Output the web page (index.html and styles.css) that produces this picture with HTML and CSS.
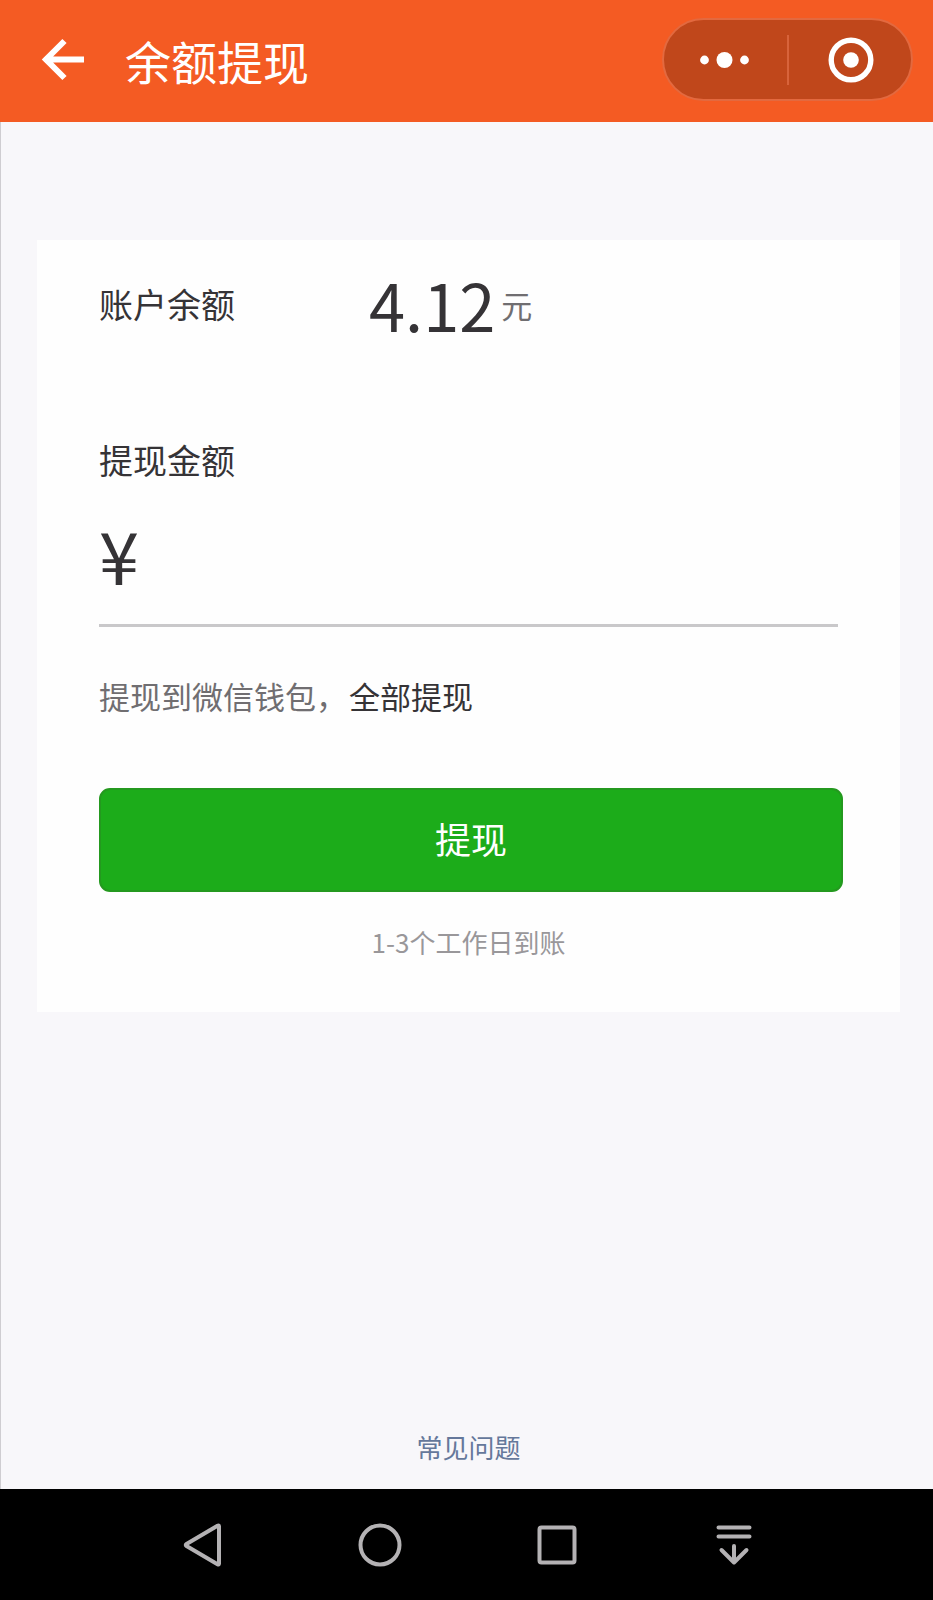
FILE: index.html
```html
<!DOCTYPE html>
<html lang="zh-CN">
<head>
    <meta charset="UTF-8">
    <meta name="viewport" content="width=device-width, initial-scale=1.0">
    <title>余额提现</title>
    <link rel="stylesheet" href="styles.css">
</head>
<body>
    <header class="topbar">
        <button type="button" class="back" aria-label="返回">
            <svg width="44" height="44" viewBox="0 0 44 44" fill="none" stroke="#fff" stroke-width="6">
                <path d="M23.5 3 5 21.5 23.5 40M5 21.5H43"/>
            </svg>
        </button>
        <h1>余额提现</h1>
        <div class="capsule">
            <button type="button" aria-label="更多">
                <svg width="50" height="18" viewBox="0 0 50 18" fill="#fff">
                    <circle cx="4.500" cy="9" r="4.400"/>
                    <circle cx="24.500" cy="9" r="8"/>
                    <circle cx="44.500" cy="9" r="4.400"/>
                </svg>
            </button>
            <span class="divider"></span>
            <button type="button" aria-label="关闭">
                <svg width="48" height="46" viewBox="0 0 48 46">
                    <circle cx="25" cy="23" r="19.800" fill="none" stroke="#fff" stroke-width="5.400"/>
                    <circle cx="25" cy="23" r="7.800" fill="#fff"/>
                </svg>
            </button>
        </div>
    </header>

    <main>
        <form class="card">
            <div class="balance">
                <span class="label">账户余额</span>
                <span class="money">4.12</span>
                <span class="unit">元</span>
            </div>
            <label class="label" for="amount">提现金额</label>
            <div class="field">
                <span class="yen">¥</span>
                <input type="text" id="amount" inputmode="decimal">
            </div>
            <p class="hint">提现到微信钱包，<a href="#" id="all">全部提现</a></p>
            <button type="submit" class="submit">提现</button>
            <p class="note">1-3个工作日到账</p>
        </form>
        <a class="faq" href="#">常见问题</a>
    </main>

    <!-- Android navigation keys -->
    <nav class="keys">
        <button type="button" aria-label="后退">
            <svg width="44" height="44" viewBox="0 0 44 44">
                <path d="M38 3.5V40.5Q38 42 36.500 41.200L5.500 23Q4 22 5.500 21L36.500 2.800Q38 2 38 3.500Z"/>
            </svg>
        </button>
        <button type="button" aria-label="主页">
            <svg width="44" height="44" viewBox="0 0 44 44">
                <circle cx="22" cy="22" r="19.500"/>
            </svg>
        </button>
        <button type="button" aria-label="最近任务">
            <svg width="44" height="44" viewBox="0 0 44 44">
                <rect x="4.500" y="4.500" width="35" height="35" rx="2"/>
            </svg>
        </button>
        <button type="button" aria-label="通知">
            <svg width="44" height="44" viewBox="0 0 44 44">
                <path d="M6.500 4.500H37.500M6.500 13.500H37.500M22 23V39M9.500 27 22 39.500 34.500 27"/>
            </svg>
        </button>
    </nav>

    <script>
        document.getElementById('all').addEventListener('click', function(event) {
            event.preventDefault();
            document.getElementById('amount').value = '4.12';
        });
    </script>
</body>
</html>
```
FILE: styles.css
```css
* {
    box-sizing: border-box;
}

body {
    margin: 0;
    min-height: 100vh;
    display: flex;
    flex-direction: column;
    font-family: "Noto Sans CJK SC", sans-serif;
    color: #353336;
    background: #f8f7fa;
}

button {
    padding: 0;
    border: none;
    background: none;
    font-family: inherit;
    cursor: pointer;
}

svg {
    display: block;
}

a {
    text-decoration: none;
}

/* Top bar */
.topbar {
    display: flex;
    align-items: center;
    height: 122px;
    padding: 0 20px 3px 41px;
    background: #f45b23;
}

.topbar h1 {
    flex: 1;
    margin: 0 0 0 40px;
    font-size: 46px;
    font-weight: normal;
    line-height: 60px;
    color: #fff;
}

.capsule {
    display: flex;
    align-items: center;
    width: 251px;
    height: 83px;
    border: 2px solid #e3693f;
    border-radius: 42px;
    background: #c0471b;
}

.capsule button {
    flex: 1;
    height: 100%;
    display: flex;
    align-items: center;
    justify-content: center;
}

.divider {
    width: 2px;
    height: 50px;
    background: #d8633b;
}

/* Withdraw card */
main {
    flex: 1;
    display: flex;
    flex-direction: column;
    justify-content: space-between;
    padding: 118px 33px 22px 36px;
    border-left: 1px solid #cfcdd1;
}

.card {
    padding: 24px 62px 50px;
    background: #fefefe;
}

.balance {
    display: flex;
    align-items: center;
    height: 80px;
    margin-bottom: 92px;
}

.label {
    display: block;
    font-size: 34px;
    line-height: 48px;
}

.balance .label {
    width: 270px;
}

.money {
    font-size: 65px;
    line-height: 80px;
}

.unit {
    margin-left: 6px;
    font-size: 31px;
    color: #706e71;
}

.field {
    display: flex;
    margin-top: 22px;
    padding-bottom: 22px;
    border-bottom: 3px solid #c9c8ca;
}

.yen {
    font-size: 72px;
    line-height: 96px;
}

.field input {
    flex: 1;
    min-width: 0;
    margin-left: 16px;
    padding: 0;
    border: none;
    outline: none;
    background: none;
    font-family: inherit;
    font-size: 65px;
    color: inherit;
}

.hint {
    margin: 46px 0 69px;
    font-size: 31px;
    line-height: 46px;
    color: #706e71;
}

.hint a {
    margin-left: 2px;
    color: #353336;
}

.submit {
    display: block;
    width: calc(100% + 5px);
    height: 104px;
    padding-bottom: 5px;
    border: 2px solid #24991f;
    border-radius: 11px;
    background: #1cac1a;
    font-size: 36px;
    color: #fff;
}

.note {
    margin: 30px 0 0;
    font-size: 26px;
    line-height: 40px;
    text-align: center;
    color: #99979a;
}

.faq {
    align-self: center;
    font-size: 26px;
    line-height: 40px;
    color: #65789b;
}

/* Navigation keys */
.keys {
    display: flex;
    height: 111px;
    padding: 0 111px 0 115px;
    background: #000;
}

.keys button {
    flex: 1;
    display: flex;
    align-items: center;
    justify-content: center;
}

.keys svg {
    fill: none;
    stroke: #b4b2b4;
    stroke-width: 4;
    stroke-linecap: round;
    stroke-linejoin: round;
}
```
